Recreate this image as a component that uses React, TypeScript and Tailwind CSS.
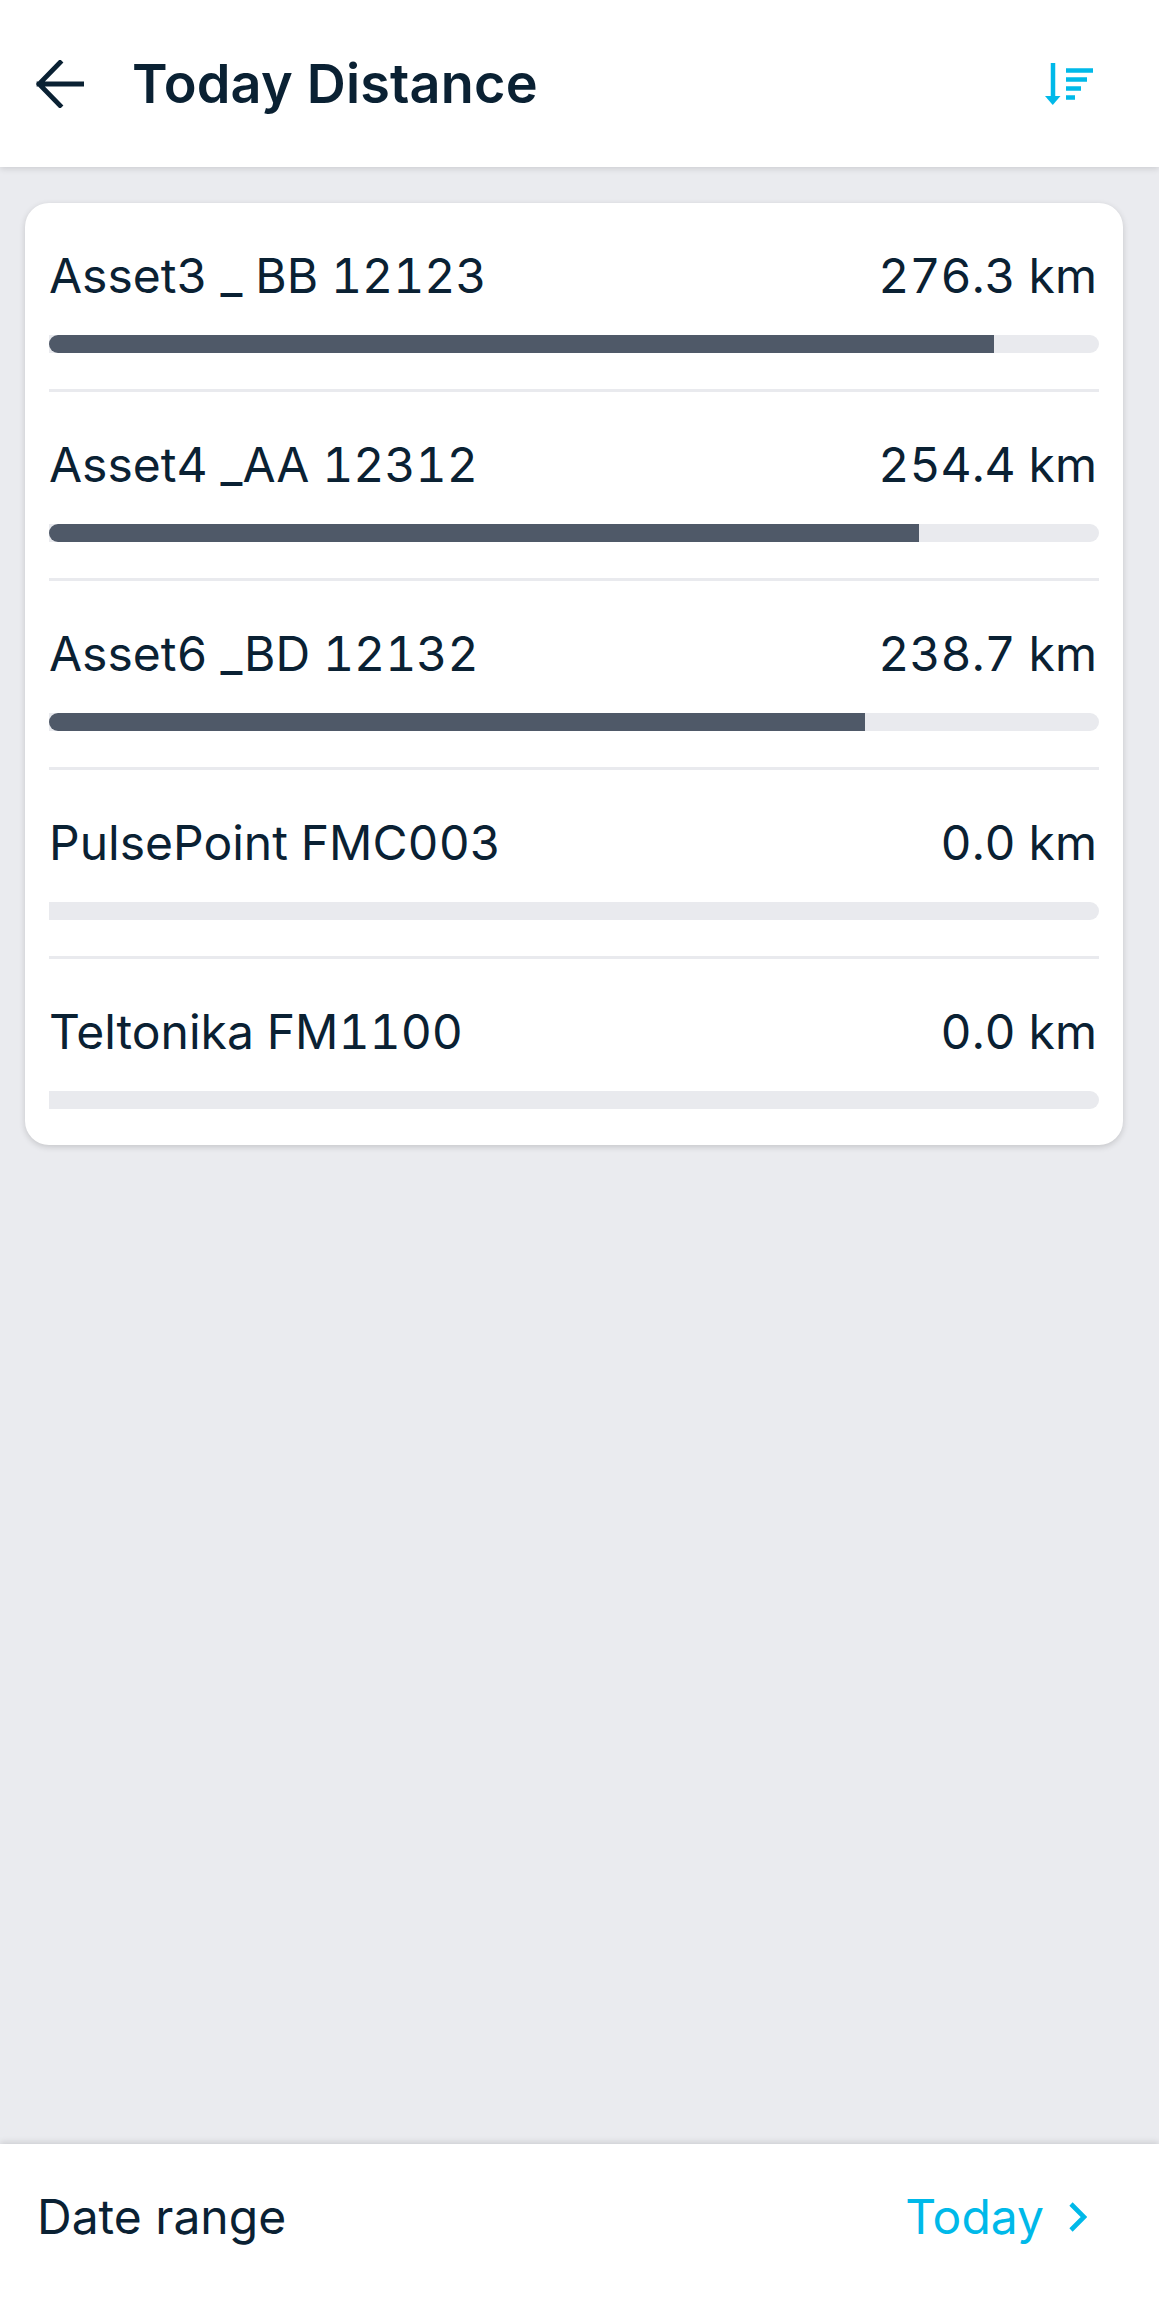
const rows = [
  { name: "Asset3 _ BB 12123", value: "276.3 km", pct: 90 },
  { name: "Asset4 _AA 12312", value: "254.4 km", pct: 82.9 },
  { name: "Asset6 _BD 12132", value: "238.7 km", pct: 77.75 },
  { name: "PulsePoint FMC003", value: "0.0 km", pct: 0 },
  { name: "Teltonika FM1100", value: "0.0 km", pct: 0 },
];

function BackIcon() {
  return (
    <svg width="48" height="48" viewBox="0 0 48 48" fill="none" className="shrink-0">
      <path d="M46 24H3M24 2.5 3 24l21 21.5" stroke="#0a2133" strokeWidth="4.8" strokeLinecap="square" />
    </svg>
  );
}

function SortIcon() {
  return (
    <svg width="48" height="42" viewBox="0 0 48 42" fill="none" className="shrink-0">
      <path d="M8 0v33" stroke="#00b9e9" strokeWidth="4.5" />
      <path d="M0 33h15.5L7.75 42z" fill="#00b9e9" />
      <path d="M21 7.5h27M21 16.5h21M21 25.5h15M21 34.5h9" stroke="#00b9e9" strokeWidth="4.5" />
    </svg>
  );
}

function ChevronIcon() {
  return (
    <svg width="18" height="30" viewBox="0 0 18 30" fill="none" className="shrink-0">
      <path d="M2 2l13 13L2 28" stroke="#00b9e9" strokeWidth="4.6" />
    </svg>
  );
}

function Row({ name, value, pct, last }: { name: string; value: string; pct: number; last: boolean }) {
  return (
    <div className={last ? "px-[24px] pt-[43px] pb-[36px]" : "mx-[24px] border-b-[3px] border-[#e9eaee] pt-[43px] pb-[36px]"}>
      <div className="flex h-[60px] items-center justify-between pr-[2px] text-[48px] text-[#0a2133] tabular-nums">
        <span>{name}</span>
        <span>{value}</span>
      </div>
      <div className="mt-[29px] h-[18px] overflow-hidden rounded-r-[9px] bg-[#e9eaee]">
        <div className="h-full rounded-l-[9px] bg-[#4f5968]" style={{ width: `${pct}%` }} />
      </div>
    </div>
  );
}

export default function App() {
  return (
    <div className="flex h-[2308px] w-[1159px] flex-col bg-[#eaebef] font-['Inter',sans-serif]">
      <header className="z-10 flex h-[167px] shrink-0 items-center bg-white pr-[66px] pl-[36px] shadow-[0_2px_6px_rgba(0,0,0,0.12)]">
        <BackIcon />
        <h1 className="ml-[48px] flex-1 text-[54px] font-semibold tracking-[0.2px] text-[#0a2133]">Today Distance</h1>
        <SortIcon />
      </header>
      <main className="flex-1 pt-[36px] pr-[36px] pl-[25px]">
        <div className="rounded-[24px] bg-white shadow-[0_2px_6px_rgba(0,0,0,0.16)]">
          {rows.map((r, i) => (
            <Row key={r.name} {...r} last={i === rows.length - 1} />
          ))}
        </div>
      </main>
      <footer className="z-10 flex h-[164px] shrink-0 items-center justify-between bg-white pr-[72px] pb-[18px] pl-[37px] shadow-[0_-2px_6px_rgba(0,0,0,0.12)]">
        <span className="text-[48px] text-[#0a2133]">Date range</span>
        <div className="flex items-center gap-[25px]">
          <span className="text-[48px] text-[#00b9e9]">Today</span>
          <ChevronIcon />
        </div>
      </footer>
    </div>
  );
}
